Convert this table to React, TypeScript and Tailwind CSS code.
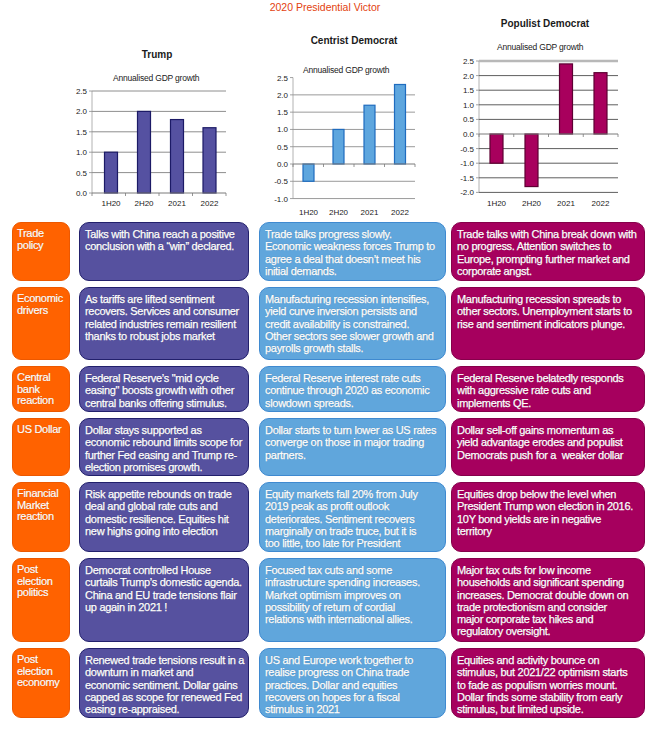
import React from "react";

type PlotProps = {
  x0: number;
  top: number;
  w: number;
  h: number;
  axisX: number;
  axisR: number;
  zeroY: number;
  unit: number;
  min: number;
  max: number;
  values: number[];
  centers: number[];
  barW: number;
  fill: string;
  stroke: string;
  grid: string;
  labelY: number;
  skipTop?: boolean;
  topLine?: boolean;
};

const CATS = ["1H20", "2H20", "2021", "2022"];

function Plot(p: PlotProps) {
  const ticks: number[] = [];
  for (let v = p.max; v >= p.min - 1e-9; v -= 0.5) ticks.push(Math.round(v * 10) / 10);
  const y = (v: number) => p.zeroY - v * p.unit;
  const step = (p.axisR - p.axisX) / 4;

  return (
    <svg
      width={p.w}
      height={p.h}
      viewBox={`${p.x0} ${p.top} ${p.w} ${p.h}`}
      className="block overflow-visible"
      fontFamily="'Liberation Sans', Arial, sans-serif"
    >
      <line x1={p.axisX} y1={y(p.max)} x2={p.axisX} y2={y(p.min)} stroke="#a0a0a0" strokeWidth={0.8} />
      {ticks.map((v) => {
        if (v === 0) return null;
        if (v === p.max && p.skipTop) return null;
        const thick = v === p.max && p.topLine;
        return (
          <line key={"g" + v} x1={p.axisX} x2={p.axisR} y1={y(v)} y2={y(v)} stroke={thick ? "#b8b8b8" : p.grid} strokeWidth={thick ? 2.5 : 1} />
        );
      })}
      {ticks.map((v) => (
        <line key={"t" + v} x1={p.axisX - 3} x2={p.axisX} y1={y(v)} y2={y(v)} stroke="#8a8a8a" strokeWidth={0.8} />
      ))}
      {ticks.map((v) => (
        <text key={"l" + v} x={p.axisX - 5} y={y(v) + 3} textAnchor="end" fontSize={8} fill="#222">
          {v.toFixed(1)}
        </text>
      ))}
      {p.values.map((v, i) => (
        <rect
          key={"b" + i}
          x={p.centers[i] - p.barW / 2}
          y={Math.min(y(v), p.zeroY)}
          width={p.barW}
          height={Math.abs(y(v) - p.zeroY)}
          fill={p.fill}
          stroke={p.stroke}
          strokeWidth={1.2}
        />
      ))}
      <line x1={p.axisX} x2={p.axisR} y1={p.zeroY} y2={p.zeroY} stroke="#7a7a7a" strokeWidth={1} />
      {[0, 1, 2, 3, 4].map((i) => (
        <line key={"x" + i} x1={p.axisX + step * i} x2={p.axisX + step * i} y1={p.zeroY} y2={p.zeroY + 3} stroke="#7a7a7a" strokeWidth={0.8} />
      ))}
      {CATS.map((c, i) => (
        <text key={c} x={p.centers[i]} y={p.labelY} textAnchor="middle" fontSize={8} fill="#222">
          {c}
        </text>
      ))}
    </svg>
  );
}

function ChartCol({ className, title, subClass, children }: { className: string; title: string; subClass: string; children: React.ReactNode }) {
  return (
    <div className={`flex flex-col ${className}`}>
      <p className="h-[14px] text-center text-[10px] font-bold leading-[14px] text-[#1a1a1a]">{title}</p>
      <p className={`h-[11px] whitespace-nowrap text-[8.5px] leading-[11px] tracking-[-0.2px] text-[#222] ${subClass}`}>Annualised GDP growth</p>
      {children}
    </div>
  );
}

type Row = {
  h: string;
  label: string[];
  trump: string[];
  centrist: string[];
  populist: string[];
};

const rows: Row[] = [
  {
    h: "h-[59px]",
    label: ["Trade", "policy"],
    trump: ["Talks with China reach a positive", "conclusion with a \u201cwin\u201d declared."],
    centrist: ["Trade talks progress slowly.", "Economic weakness forces Trump to", "agree a deal that doesn\u2019t meet his", "initial demands."],
    populist: ["Trade talks with China break down with", "no progress. Attention switches to", "Europe, prompting further market and", "corporate angst."],
  },
  {
    h: "h-[73px]",
    label: ["Economic", "drivers"],
    trump: ["As tariffs are lifted sentiment", "recovers. Services and consumer", "related industries remain resilient", "thanks to robust jobs market"],
    centrist: ["Manufacturing recession intensifies,", "yield curve inversion persists and", "credit availability is constrained.", "Other sectors see slower growth and", "payrolls growth stalls."],
    populist: ["Manufacturing recession spreads to", "other sectors. Unemployment starts to", "rise and sentiment indicators plunge."],
  },
  {
    h: "h-[46px]",
    label: ["Central", "bank", "reaction"],
    trump: ["Federal Reserve\u2019s \"mid cycle", "easing\" boosts growth with other", "central banks offering stimulus."],
    centrist: ["Federal Reserve interest rate cuts", "continue through 2020 as economic", "slowdown spreads."],
    populist: ["Federal Reserve belatedly responds", "with aggressive rate cuts and", "implements QE."],
  },
  {
    h: "h-[58px]",
    label: ["US Dollar"],
    trump: ["Dollar stays supported as", "economic rebound limits scope for", "further Fed easing and Trump re-", "election promises growth."],
    centrist: ["Dollar starts to turn lower as US rates", "converge on those in major trading", "partners."],
    populist: ["Dollar sell-off gains momentum as", "yield advantage erodes and populist", "Democrats push for a  weaker dollar"],
  },
  {
    h: "h-[70px]",
    label: ["Financial", "Market", "reaction"],
    trump: ["Risk appetite rebounds on trade", "deal and global rate cuts and", "domestic resilience. Equities hit", "new highs going into election"],
    centrist: ["Equity markets fall 20% from July", "2019 peak as profit outlook", "deteriorates. Sentiment recovers", "marginally on trade truce, but it is", "too little, too late for President"],
    populist: ["Equities drop below the level when", "President Trump won election in 2016.", "10Y bond yields are in negative", "territory"],
  },
  {
    h: "h-[84px]",
    label: ["Post", "election", "politics"],
    trump: ["Democrat controlled House", "curtails Trump\u2019s domestic agenda.", "China and EU trade tensions flair", "up again in 2021 !"],
    centrist: ["Focused tax cuts and some", "infrastructure spending increases.", "Market optimism improves on", "possibility of return of cordial", "relations with international allies."],
    populist: ["Major tax cuts for low income", "households and significant spending", "increases. Democrat double down on", "trade protectionism and consider", "major corporate tax hikes and", "regulatory oversight."],
  },
  {
    h: "h-[70px]",
    label: ["Post", "election", "economy"],
    trump: ["Renewed trade tensions result in a", "downturn in market and", "economic sentiment. Dollar gains", "capped as scope for renewed Fed", "easing re-appraised."],
    centrist: ["US and Europe work together to", "realise progress on China trade", "practices. Dollar and equities", "recovers on hopes for a fiscal", "stimulus in 2021"],
    populist: ["Equities and activity bounce on", "stimulus, but 2021/22 optimism starts", "to fade as populism worries mount.", "Dollar finds some stability from early", "stimulus, but limited upside."],
  },
];

function Cell({ lines, className }: { lines: string[]; className: string }) {
  return (
    <div
      className={`overflow-hidden whitespace-pre rounded-[10px] border-[1.5px] pl-[5px] pt-[5px] text-[11px] leading-[12.3px] tracking-[-0.3px] text-white [-webkit-text-stroke:0.25px_white] [text-shadow:0_0_1px_rgba(0,0,0,0.35)] ${className}`}
    >
      {lines.map((l, i) => (
        <div key={i}>{l}</div>
      ))}
    </div>
  );
}

export default function App() {
  return (
    <div className="h-[729px] w-[650px] overflow-hidden bg-white font-['Liberation_Sans',Arial,sans-serif]">
      {/* charts */}
      <div className="h-[222px]">
        <p className="h-[15px] text-center text-[10.5px] leading-[15px] text-[#e3420f]">2020 Presidential Victor</p>
        <div className="flex items-start">
          <ChartCol className="ml-[70px] mt-[33px] w-[174px]" title="Trump" subClass="mt-[11px] pl-[43px]">
            <Plot
              x0={70} top={84} w={174} h={128}
              axisX={92} axisR={226} zeroY={193} unit={40.8} min={0} max={2.5}
              values={[1.0, 2.0, 1.8, 1.6]} centers={[111, 144, 177, 209.5]} barW={13}
              fill="#5551a1" stroke="#1c1a66" grid="#8e8e8e" labelY={206}
            />
          </ChartCol>
          <ChartCol className="ml-[26px] mt-[19px] w-[168px]" title="Centrist Democrat" subClass="mt-[17px] pl-[33px]">
            <Plot
              x0={270} top={76} w={168} h={144}
              axisX={293} axisR={415} zeroY={164} unit={34.57} min={-1} max={2.5}
              values={[-0.5, 1.0, 1.7, 2.3]} centers={[308.5, 338.5, 369.5, 400]} barW={11}
              fill="#5ea6de" stroke="#1f6cbf" grid="#9a9a9a" labelY={215} skipTop
            />
          </ChartCol>
          <ChartCol className="ml-[17px] mt-[2px] w-[180px]" title="Populist Democrat" subClass="mt-[11px] pl-[42px]">
            <Plot
              x0={455} top={53} w={180} h={160}
              axisX={479} axisR={618} zeroY={134} unit={29.2} min={-2} max={2.5}
              values={[-1.0, -1.8, 2.4, 2.1]} centers={[496.5, 531.5, 566, 600.5]} barW={13}
              fill="#a8005d" stroke="#5e0033" grid="#5e5e5e" labelY={206} topLine
            />
          </ChartCol>
        </div>
      </div>

      {/* scenario table */}
      <div className="flex flex-col gap-[6px]">
        {rows.map((r) => (
          <div key={r.label.join(" ")} className={`flex ${r.h}`}>
            <div className="ml-[12px] w-[58px] overflow-hidden whitespace-pre rounded-[9px] border border-[#ec5800] bg-[#ff6200] pl-[4px] pt-[5px] text-[11px] leading-[11.5px] tracking-[-0.3px] text-white [-webkit-text-stroke:0.2px_white] [text-shadow:0_0_1px_rgba(0,0,0,0.25)]">
              {r.label.map((l, i) => (
                <div key={i}>{l}</div>
              ))}
            </div>
            <Cell lines={r.trump} className="ml-[9px] w-[170px] border-[#22206c] bg-[#56519f]" />
            <Cell lines={r.centrist} className="ml-[10px] w-[187px] border-[#3f8ad0] bg-[#60a6dc]" />
            <Cell lines={r.populist} className="ml-[5px] w-[194px] border-[#86004b] bg-[#a6005e]" />
          </div>
        ))}
      </div>
    </div>
  );
}
